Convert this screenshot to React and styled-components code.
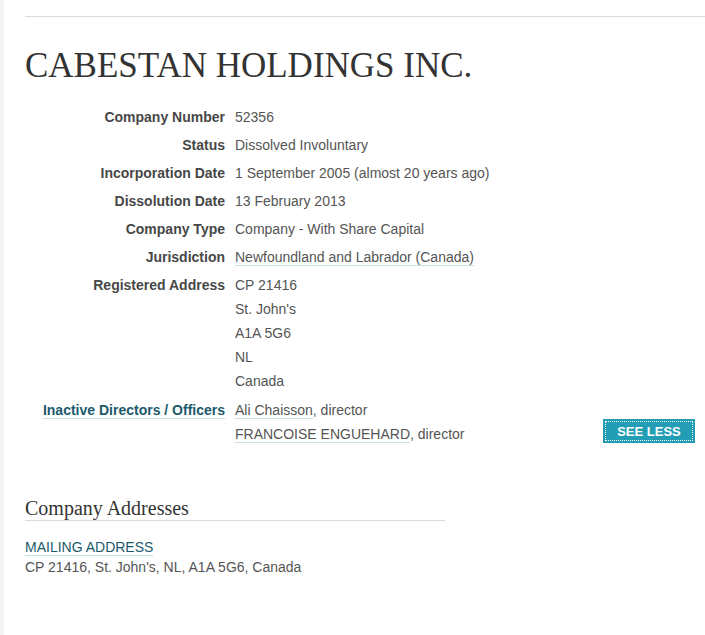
import React from "react";
import styled, { createGlobalStyle } from "styled-components";

const Global = createGlobalStyle`
  html, body { margin: 0; padding: 0; }
  body {
    background: #f4f4f4;
    font-family: "Liberation Sans", Arial, sans-serif;
    font-size: 14px;
    color: #555;
  }
`;

const Page = styled.div`
  margin-left: 4px;
  min-height: 100vh;
  background: #fff;
  padding: 16px 0 40px 21px;
  box-sizing: border-box;
`;

const TopRule = styled.div`
  border-top: 1px solid #dcdcdc;
`;

const Title = styled.h1`
  margin: 28px 0 18px;
  font-family: "Liberation Serif", "Times New Roman", serif;
  font-weight: 400;
  font-size: 35px;
  line-height: 42px;
  color: #333;
`;

const Details = styled.dl`
  display: grid;
  grid-template-columns: 200px 1fr;
  column-gap: 10px;
  margin: 0;
  padding-right: 10px;
`;

const Label = styled.dt`
  text-align: right;
  font-weight: 700;
  color: #474747;
  line-height: 24px;
  margin-bottom: ${(p) => (p.$tall ? "5px" : "4px")};
`;

const Value = styled.dd`
  margin: 0 0 ${(p) => (p.$tall ? "5px" : "4px")};
  line-height: 24px;
  color: #555;
`;

const Link = styled.a`
  color: ${(p) => (p.$accent ? "#1b5a6b" : "#555")};
  text-decoration: none;
  border-bottom: 1px solid #c8dfe4;
`;

const Line = styled.div``;

const Officers = styled.div`
  display: flex;
  justify-content: space-between;
  align-items: flex-end;
`;

const SeeLess = styled.button`
  background: #229db3;
  color: #fff;
  border: none;
  font-family: "Liberation Sans", Arial, sans-serif;
  font-weight: 700;
  font-size: 13px;
  text-transform: uppercase;
  width: 92px;
  height: 24px;
  padding: 0;
  margin-bottom: 3px;
  outline: 1px dotted #fff;
  outline-offset: -3px;
`;

const Section = styled.section`
  margin-top: 46px;
  width: 420px;
`;

const SectionTitle = styled.h2`
  margin: 0;
  font-family: "Liberation Serif", "Times New Roman", serif;
  font-weight: 400;
  font-size: 20px;
  line-height: 24px;
  color: #333;
  border-bottom: 1px solid #dcdcdc;
`;

const AddressBlock = styled.div`
  margin-top: 16px;
  line-height: 20px;
  color: #555;
`;

const AddressLink = styled.a`
  color: #1b5a6b;
  text-decoration: none;
  border-bottom: 1px solid #c8dfe4;
`;

const rows = [
  ["Company Number", "52356"],
  ["Status", "Dissolved Involuntary"],
  ["Incorporation Date", "1 September 2005 (almost 20 years ago)"],
  ["Dissolution Date", "13 February 2013"],
  ["Company Type", "Company - With Share Capital"],
];

export default function App() {
  return (
    <>
      <Global />
      <Page>
        <TopRule />
        <Title>CABESTAN HOLDINGS INC.</Title>
        <Details>
          {rows.map(([k, v]) => (
            <React.Fragment key={k}>
              <Label>{k}</Label>
              <Value>{v}</Value>
            </React.Fragment>
          ))}
          <Label>Jurisdiction</Label>
          <Value>
            <Link href="#">Newfoundland and Labrador (Canada)</Link>
          </Value>
          <Label $tall>Registered Address</Label>
          <Value $tall>
            <Line>CP 21416</Line>
            <Line>St. John's</Line>
            <Line>A1A 5G6</Line>
            <Line>NL</Line>
            <Line>Canada</Line>
          </Value>
          <Label>
            <Link href="#" $accent>
              Inactive Directors / Officers
            </Link>
          </Label>
          <Value>
            <Officers>
              <div>
                <Line>
                  <Link href="#">Ali Chaisson</Link>, director
                </Line>
                <Line>
                  <Link href="#">FRANCOISE ENGUEHARD</Link>, director
                </Line>
              </div>
              <SeeLess>See less</SeeLess>
            </Officers>
          </Value>
        </Details>
        <Section>
          <SectionTitle>Company Addresses</SectionTitle>
          <AddressBlock>
            <div>
              <AddressLink href="#">MAILING ADDRESS</AddressLink>
            </div>
            <div>CP 21416, St. John's, NL, A1A 5G6, Canada</div>
          </AddressBlock>
        </Section>
      </Page>
    </>
  );
}
